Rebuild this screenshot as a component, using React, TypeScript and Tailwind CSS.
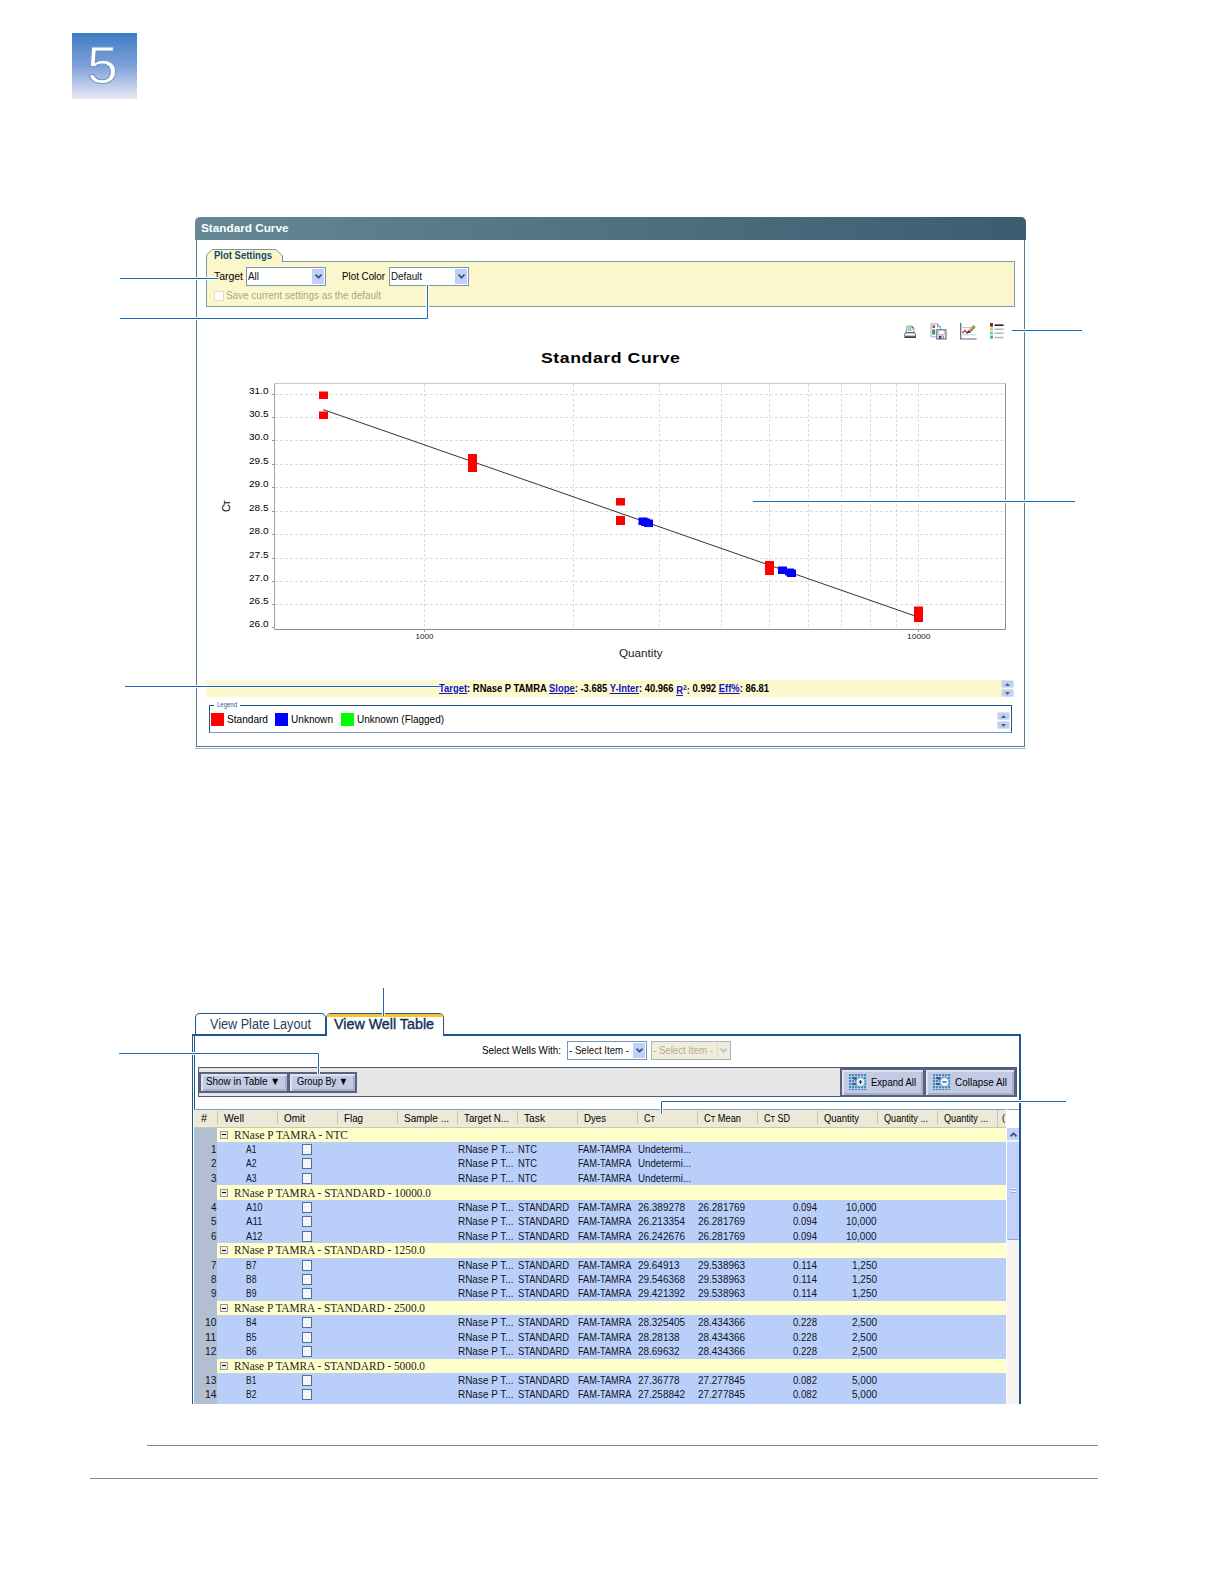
import { useLayoutEffect, useRef, useState } from "react";
import type { ReactNode } from "react";

// Squeezes or stretches a single line of text to a fixed width.
function Fit({ w, children, className = "" }: { w: number; children: ReactNode; className?: string }) {
  const ref = useRef<HTMLSpanElement>(null);
  const [scale, setScale] = useState(1);

  useLayoutEffect(() => {
    if (ref.current) setScale(w / parseFloat(getComputedStyle(ref.current).width));
  }, [w]);

  return (
    <span className={`inline-block shrink-0 text-left ${className}`} style={{ width: w }}>
      <span ref={ref} className="inline-block origin-left whitespace-nowrap" style={{ transform: `scaleX(${scale})` }}>
        {children}
      </span>
    </span>
  );
}

function Chevron({ color = "#3f5688", up = false }: { color?: string; up?: boolean }) {
  return (
    <svg width="9" height="7" viewBox="0 0 9 7" fill="none">
      <path d={up ? "M1.5 5.3 4.5 2.3 7.5 5.3" : "M1.5 1.7 4.5 4.7 7.5 1.7"} stroke={color} strokeWidth="1.9" />
    </svg>
  );
}

function Select({ label, w, disabled = false }: { label: string; w: number; disabled?: boolean }) {
  return (
    <div
      className={`flex h-[19px] w-[80px] items-center justify-between border p-px pl-[1px] ${
        disabled ? "border-[#a3b5bd] bg-[#f0eddc] text-[#b3ae9b]" : "border-[#7796b4] bg-white text-[#111]"
      }`}
    >
      <Fit w={w} className="-mt-[2px]">{label}</Fit>
      <div
        className={`flex h-[15px] w-[12px] items-center justify-center ${
          disabled ? "border-l border-[#dedbc9] bg-[#f0edde]" : "bg-[#c0d0f8]"
        }`}
      >
        <Chevron color={disabled ? "#c5c2b0" : "#3f5688"} />
      </div>
    </div>
  );
}

function Spinner() {
  return (
    <div className="flex h-[17px] w-[13px] flex-col gap-px">
      <div className="flex flex-1 items-center justify-center rounded-[2px] border border-[#d5e0f5] bg-[#c1d0f2]">
        <svg width="5" height="3" viewBox="0 0 5 3"><path d="M0 3 2.5 0 5 3z" fill="#4a608c" /></svg>
      </div>
      <div className="flex flex-1 items-center justify-center rounded-[2px] border border-[#d5e0f5] bg-[#c1d0f2]">
        <svg width="5" height="3" viewBox="0 0 5 3"><path d="M0 0 2.5 3 5 0z" fill="#4a608c" /></svg>
      </div>
    </div>
  );
}

function PlotIcons() {
  return (
    <div className="flex h-[18px] items-start">
      <svg className="mr-[14px] mt-[2px]" width="12" height="13" viewBox="0 0 12 13" fill="none">
        <path d="M3 1h5l2 2v5H2z" fill="#f2fbf6" stroke="#7f9f95" strokeWidth=".9" />
        <path d="M4 3h3M3.5 5h4" stroke="#4f9c85" strokeWidth="1" />
        <path d="M8 1v2h2" stroke="#315c5c" strokeWidth=".8" />
        <path d="M1.5 7.5h9l1 1.5v3.5H.7V9z" fill="#c8cce0" stroke="#454c6c" strokeWidth=".8" />
        <path d="M1 9.5h10" stroke="#fff" strokeWidth="1" />
        <path d="M1 12h10.5" stroke="#171c38" strokeWidth="1.2" />
      </svg>
      <svg className="mr-[13px]" width="17" height="17" viewBox="0 0 17 17" fill="none">
        <path d="M1 .8h6.5l3 3v10H1z" fill="#fafdff" stroke="#8aa9c9" strokeWidth=".9" />
        <path d="M7.5.8v3h3" stroke="#55a3cf" strokeWidth="1" />
        <rect x="2.5" y="2.3" width="2.6" height="2.6" fill="#d82e30" />
        <rect x="2.2" y="6.5" width="3" height="5" fill="#2c9b6a" />
        <rect x="6.8" y="6.8" width="9.2" height="9.2" fill="#ecedf8" stroke="#5c5d86" strokeWidth="1" />
        <rect x="8.6" y="7.3" width="5.6" height="4" fill="#fff" stroke="#a6a7c6" strokeWidth=".6" />
        <rect x="8.8" y="12.8" width="4.8" height="3" fill="#40416c" />
        <rect x="11.5" y="13.3" width="1.5" height="2.2" fill="#fff" />
      </svg>
      <svg className="mr-[13px]" width="17" height="17" viewBox="0 0 17 17" fill="none">
        <path d="M2 4.5h9M2 11.8h14" stroke="#b5d0d2" strokeWidth="1" />
        <path d="M.7 0v16h16" stroke="#546a82" strokeWidth="1.2" />
        <path d="m2.3 10 2.6-2.6 2 2.6 2-1.2" stroke="#d32640" strokeWidth="1.3" />
        <path d="m9 9 5.5-6" stroke="#6b5b36" strokeWidth="2.6" />
        <path d="m9.5 8 4.5-5" stroke="#d4b860" strokeWidth="1.3" />
        <path d="m6.5 10.6 1.6-3 2.2 2z" fill="#3c2930" />
      </svg>
      <svg width="14" height="17" viewBox="0 0 14 17">
        <rect width="3" height="3.6" fill="#8c2425" />
        <rect y="4.4" width="3" height="3" fill="#ecc34c" />
        <rect y="8.4" width="3" height="3" fill="#5fd1e4" />
        <rect y="12.6" width="3" height="3" fill="#3fc45a" />
        <rect x="4.5" y="1.4" width="9" height="1.6" fill="#222" />
        <path d="M4.5 6.2h9M4.5 10.2h9M4.5 14.4h9" stroke="#b5b5b5" strokeWidth="1.5" />
      </svg>
    </div>
  );
}

const yTicks: [string, number][] = [
  ["31.0", 394.5], ["30.5", 417.5], ["30.0", 440.5], ["29.5", 464.5], ["29.0", 487.5], ["28.5", 511.5],
  ["28.0", 534.5], ["27.5", 558.5], ["27.0", 581.5], ["26.5", 604.5], ["26.0", 627.5],
];
const xGrid = [424.5, 573.5, 659.5, 721.5, 769.5, 808.5, 841.5, 870.5, 896.5, 918.5];

const standards = [
  [319, 391.5, 7.5], [319, 411.5, 7.5], [468, 454, 18], [616, 498, 7.5], [616, 516, 9], [765, 561, 14], [914, 606.5, 15.5],
];
const unknowns = [
  [638.5, 517.5, 7.5], [641, 518.5, 7.5], [644, 519.5, 7.5], [778, 566.5, 7.5], [785, 568.5, 7], [787, 569.5, 7.5],
];

function CurvePlot() {
  return (
    <svg width="827" height="330" viewBox="197 345 827 330" fontFamily="Liberation Sans, Arial, sans-serif">
      <text x="541" y="362.7" fontSize="15.5" fontWeight="700" letterSpacing=".5" textLength="139.5" lengthAdjust="spacingAndGlyphs">Standard Curve</text>
      <g stroke="#dcdcdc" strokeWidth="1" strokeDasharray="3 2">
        {yTicks.slice(0, 10).map(([t, y]) => <line key={t} x1="275" x2="1005" y1={y} y2={y} />)}
        {xGrid.map((x) => <line key={x} x1={x} x2={x} y1="384" y2="629" />)}
      </g>
      {yTicks.map(([t, y]) => (
        <g key={t}>
          <line x1="272" x2="275" y1={y} y2={y} stroke="#999" />
          <text x="249" y={y - 1} fontSize="9" textLength="19.5" lengthAdjust="spacingAndGlyphs">{t}</text>
        </g>
      ))}
      <path d="M274.5 383.5H1005.5" stroke="#c9c9c9" />
      <path d="M274.5 383.5V629.5" stroke="#a2a2a2" />
      <path d="M1005.5 383.5V629.5H274.5" stroke="#8c8c8c" fill="none" />
      <path d="M424.5 630v2M918.5 630v2" stroke="#999" />
      <line x1="323" y1="409.5" x2="918" y2="617" stroke="#333" strokeWidth="1" />
      {standards.map(([x, y, h]) => <rect key={`${x}-${y}`} x={x} y={y} width="9" height={h} fill="#f00" />)}
      {unknowns.map(([x, y, h]) => <rect key={`${x}-${y}`} x={x} y={y} width="9" height={h} fill="#00f" />)}
      <text x="415.5" y="639.3" fontSize="8" fill="#222" textLength="18" lengthAdjust="spacingAndGlyphs">1000</text>
      <text x="907" y="639.3" fontSize="8" fill="#222" textLength="23.5" lengthAdjust="spacingAndGlyphs">10000</text>
      <text x="619" y="657" fontSize="11" fill="#222" textLength="43.5" lengthAdjust="spacingAndGlyphs">Quantity</text>
      <text transform="translate(230 512) rotate(-90)" fontSize="11" textLength="12">C<tspan fontSize="9">T</tspan></text>
    </svg>
  );
}

function StandardCurve() {
  const link = "text-[#1313c8] underline";
  return (
    <section className="ml-[195px] mt-[118px] h-[533px] w-[831px] text-[11px] leading-[14px]">
      <div className="flex h-[23px] items-center rounded-t-[5px] bg-linear-to-r from-[#658895] to-[#3a5d70] pb-px pl-[6px] text-[11px] font-bold text-white">
        <Fit w={87.5}>Standard Curve</Fit>
      </div>
      <div className="mx-px h-[507px] border-x border-b border-[#557a94] px-[9px] pt-[9px]">
        <div className="relative z-10 -mb-px flex h-[13px]">
          <svg className="absolute left-0 top-0" width="78" height="13" viewBox="0 0 78 13">
            <path d="M.5 13V6L6 .5H70L76.5 7V13" fill="#fcf7c9" stroke="#7593a4" />
          </svg>
          <Fit w={58} className="relative ml-[8px] -mt-px font-bold leading-[14px] text-[#0d4a78]">Plot Settings</Fit>
        </div>
        <div className="h-[46px] w-[809px] border border-[#7f9aac] bg-[#fcf6cc] pl-[7px] pt-[5px]">
          <div className="flex items-center">
            <Fit w={29} className="-mt-[2px] mr-[3px]">Target</Fit>
            <Select label="All" w={11} />
            <Fit w={43} className="-mt-[2px] ml-[16px] mr-[4px]">Plot Color</Fit>
            <Select label="Default" w={31} />
          </div>
          <div className="mt-[2px] flex items-center text-[#a9a58d]">
            <span className="mr-[2px] mt-[1px] h-[10px] w-[10px] border border-[#e0dcc2] bg-white" />
            <Fit w={155}>Save current settings as the default</Fit>
          </div>
        </div>
        <div className="flex h-[38px] justify-end pr-[11px] pt-[16px]">
          <PlotIcons />
        </div>
        <div className="-mx-[9px]">
          <CurvePlot />
        </div>
        <div className="mt-[5px] flex h-[17px] w-[808px] items-center justify-between bg-[#fcf9cf] pl-[233px] font-bold">
          <Fit w={330}>
            <span className={link}>Target</span>: RNase P TAMRA <span className={link}>Slope</span>: -3.685{" "}
            <span className={link}>Y-Inter</span>: 40.966{" "}
            <span className="relative top-[2px] text-[#1313c8]">
              <span className="underline">R</span><span className="relative -top-[4px] text-[8px]">2</span>:
            </span>{" "}
            0.992 <span className={link}>Eff%</span>: 86.81
          </Fit>
          <Spinner />
        </div>
        <div className="relative ml-[3px] mt-[8px] flex h-[28px] w-[803px] items-center border border-b-[#7c9ab5] border-l-[#2c5378] border-r-[#2c5378] border-t-[#2c5378] pl-[1px]">
          <span className="absolute left-[4px] top-[-6px] flex bg-white px-[3px] text-[7px] leading-[10px] text-[#2d6090]">
            <Fit w={20}>Legend</Fit>
          </span>
          <span className="mr-[3px] h-[13px] w-[13px] bg-[#f00]" />
          <Fit w={41}>Standard</Fit>
          <span className="ml-[7px] mr-[3px] h-[13px] w-[13px] bg-[#00f]" />
          <Fit w={42}>Unknown</Fit>
          <span className="ml-[8px] mr-[3px] h-[13px] w-[13px] bg-[#0f0]" />
          <Fit w={87}>Unknown (Flagged)</Fit>
          <span className="ml-auto mr-px mt-[3px]"><Spinner /></span>
        </div>
      </div>
      <div className="mt-px h-px bg-[#9db9cf]" />
    </section>
  );
}

const rowData: { group: string; gw: number; rows: [string, string, string, string, string, string][] }[] = [
  { group: "RNase P TAMRA - NTC", gw: 114, rows: [
    ["A1", "NTC", "Undetermi...", "", "", ""],
    ["A2", "NTC", "Undetermi...", "", "", ""],
    ["A3", "NTC", "Undetermi...", "", "", ""],
  ] },
  { group: "RNase P TAMRA - STANDARD - 10000.0", gw: 197, rows: [
    ["A10", "STANDARD", "26.389278", "26.281769", "0.094", "10,000"],
    ["A11", "STANDARD", "26.213354", "26.281769", "0.094", "10,000"],
    ["A12", "STANDARD", "26.242676", "26.281769", "0.094", "10,000"],
  ] },
  { group: "RNase P TAMRA - STANDARD - 1250.0", gw: 191, rows: [
    ["B7", "STANDARD", "29.64913", "29.538963", "0.114", "1,250"],
    ["B8", "STANDARD", "29.546368", "29.538963", "0.114", "1,250"],
    ["B9", "STANDARD", "29.421392", "29.538963", "0.114", "1,250"],
  ] },
  { group: "RNase P TAMRA - STANDARD - 2500.0", gw: 191, rows: [
    ["B4", "STANDARD", "28.325405", "28.434366", "0.228", "2,500"],
    ["B5", "STANDARD", "28.28138", "28.434366", "0.228", "2,500"],
    ["B6", "STANDARD", "28.69632", "28.434366", "0.228", "2,500"],
  ] },
  { group: "RNase P TAMRA - STANDARD - 5000.0", gw: 191, rows: [
    ["B1", "STANDARD", "27.36778", "27.277845", "0.082", "5,000"],
    ["B2", "STANDARD", "27.258842", "27.277845", "0.082", "5,000"],
  ] },
];

const headers: [ReactNode, number][] = [
  ["Well", 20], ["Omit", 21], ["Flag", 19], ["Sample ...", 45], ["Target N...", 45], ["Task", 21], ["Dyes", 22],
  [<>C<span className="text-[9px]">T</span></>, 11],
  [<>C<span className="text-[9px]">T</span> Mean</>, 37],
  [<>C<span className="text-[9px]">T</span> SD</>, 26],
  ["Quantity", 35], ["Quantity ...", 44], ["Quantity ...", 44],
];

const columns =
  "grid grid-cols-[23px_60px_60px_60px_60px_60px_60px_60px_60px_60px_60px_60px_60px_60px_9px]";

const numWidth = (s: string) => [...s].reduce((sum, c) => sum + (c === "." || c === "," ? 3 : 5.5), 0);
const resultWidth = (s: string) => (s.startsWith("U") ? 53 : numWidth(s));

function Checkbox() {
  return <span className="ml-[25px] mt-[2px] h-[11px] w-[10px] border border-[#4f6f96] bg-[#f4f7f4]" />;
}

function WellTable() {
  let n = 0;
  return (
    <div className="w-[812px]">
      <div className={`${columns} h-[18.6px] border-b border-t border-b-[#cbc7b2] border-t-[#7f9dbd] bg-[#ece9d8] leading-[17px]`}>
        <span className="pl-[7px]"><Fit w={6}>#</Fit></span>
        {headers.map(([h, w], i) => (
          <span key={i} className="flex pl-[6px]">
            <span className="-ml-[6px] mr-[6px] mt-[1px] h-[13px] w-px bg-[#c9c6b8]" />
            <Fit w={w}>{h}</Fit>
          </span>
        ))}
        <span className="border-l border-[#c9c6b8] pl-[4px] text-[9px]"><Fit w={3}>(</Fit></span>
      </div>
      {rowData.map(({ group, gw, rows }) => (
        <div key={group}>
          <div className="flex h-[14.45px] bg-[#b2bed2] pl-[23px]">
            <div className="flex flex-1 items-center bg-[#ffffcc] pl-[3px] font-['Liberation_Serif',serif] text-[12px] leading-[14px] text-[#222]">
              <span className="mr-[6px] flex h-[8px] w-[8px] items-center justify-center border border-[#9797a0] bg-[#f0f0ea]">
                <span className="h-px w-[4px] bg-black" />
              </span>
              <Fit w={gw}>{group}</Fit>
            </div>
          </div>
          {rows.map(([well, task, ct, mean, sd, qty]) => {
            n += 1;
            return (
              <div key={well} className={`${columns} h-[14.45px] bg-[#b9cffa] leading-[15px] text-[#10141f]`}>
                <span className="bg-[#b2bed2] pr-[.5px] text-right"><Fit w={n > 9 ? 11.5 : 5.5}>{n}</Fit></span>
                <span className="pl-[29px]"><Fit w={well.length > 2 ? 16.5 : 10.5}>{well}</Fit></span>
                <span className="flex"><Checkbox /></span>
                <span />
                <span />
                <span className="pl-px"><Fit w={55.5}>RNase P T...</Fit></span>
                <span className="pl-px"><Fit w={task === "NTC" ? 19 : 51}>{task}</Fit></span>
                <span className="pl-px"><Fit w={53.5}>FAM-TAMRA</Fit></span>
                <span className="pl-px"><Fit w={resultWidth(ct)}>{ct}</Fit></span>
                <span className="pl-px">{mean && <Fit w={numWidth(mean)}>{mean}</Fit>}</span>
                <span className="pr-[.5px] text-right">{sd && <Fit w={24}>{sd}</Fit>}</span>
                <span className="pr-[.5px] text-right">{qty && <Fit w={numWidth(qty)}>{qty}</Fit>}</span>
                <span /><span /><span />
              </div>
            );
          })}
        </div>
      ))}
      <div className="h-[3px] bg-[#b9cffa]"><div className="h-full w-[23px] bg-[#b2bed2]" /></div>
    </div>
  );
}

function WellsIcon({ minus = false }: { minus?: boolean }) {
  return (
    <svg width="18" height="16" viewBox="0 0 18 16">
      <rect width="18" height="16" fill="#4a86bd" />
      <path d="M2.5 0v16M5.5 0v16M8.5 0v16M11.5 0v16M14.5 0v16M17.5 0v16" stroke="#a5c8e6" strokeWidth="1" />
      <path d="M0 2.5h18M0 5.5h18M0 8.5h18M0 11.5h18M0 14.5h18" stroke="#a5c8e6" strokeWidth="1" />
      <rect x="3" y="3" width="4" height="2" fill="#3a5f8e" />
      <rect x="3" y="9" width="4" height="2" fill="#3a5f8e" />
      <path d="M5 5.5h3" stroke="#b84a5c" />
      <circle cx="11.5" cy="8" r="4.5" fill="#eff6fc" stroke="#6d9bc6" />
      <path d={minus ? "M9.5 8h4" : "M9.5 8h4M11.5 6v4"} stroke="#173c70" strokeWidth="1.2" />
    </svg>
  );
}

const bevel = "flex items-center border-2 border-[#5b637c] bg-[#c3cbe4] inset-shadow-[2px_2px_0_#dde3f1,-2px_-2px_0_#a6b0cb]";

function WellTablePanel() {
  return (
    <section className="ml-[192px] mt-[263px] w-[829px] text-[11px] leading-[14px]">
      <div className="relative z-10 -mb-[2px] flex h-[23px] pl-[3px] text-[14px] leading-[20px]">
        <div className="w-[131px] rounded-t-[5px] border-[1.5px] border-b-2 border-[#1d568b] bg-white pl-[14px] text-[#27425e]">
          <Fit w={101}>View Plate Layout</Fit>
        </div>
        <div className="h-[23px] w-[118px] rounded-t-[5px] border border-b-0 border-[#1d568b] bg-white">
          <div className="h-[3px] rounded-t-[4px] bg-[#f6c42e]" />
          <div className="-mt-[3px] pl-[7px] text-[#0c3158] [-webkit-text-stroke:0.35px]">
            <Fit w={100}>View Well Table</Fit>
          </div>
        </div>
      </div>
      <div className="flex h-[370px] flex-col overflow-hidden border-l border-r-2 border-t-2 border-[#1d568b] pl-px">
        <div className="flex h-full flex-col border-l border-[#1d568b]">
          <div className="flex items-center pl-[287px] pt-[5px]">
            <Fit w={79} className="-mt-px mr-[6px]">Select Wells With:</Fit>
            <Select label="- Select Item -" w={60} />
            <span className="w-[4px]" />
            <Select label="- Select Item -" w={60} disabled />
          </div>
          <div className="ml-[3px] mt-[7px] flex h-[30px] w-[819px] items-center border border-[#4e5878] bg-[#e6e6e6]">
            <div className={`${bevel} h-[21px] w-[90px] pb-[2px] pl-[5px]`}><Fit w={74}>Show in Table ▼</Fit></div>
            <div className={`${bevel} -ml-px h-[21px] w-[69px] pb-[2px] pl-[7px]`}><Fit w={51}>Group By ▼</Fit></div>
            <div className={`${bevel} ml-auto h-[29px] w-[85px] gap-[4px] pb-px pl-[7px]`}><WellsIcon /><Fit w={45}>Expand All</Fit></div>
            <div className={`${bevel} -ml-px h-[29px] w-[92px] gap-[4px] pb-px pl-[7px]`}><WellsIcon minus /><Fit w={52}>Collapse All</Fit></div>
          </div>
          <div className="-ml-px mt-[12px] flex flex-1">
            <WellTable />
            <div className="ml-px flex w-[12px] flex-col border-t border-[#7f9dbd] bg-[#f4f3ef]">
              <div className="h-[18px] bg-white" />
              <div className="flex h-[12px] items-center justify-center rounded-[1px] bg-[#c3d2fb]"><Chevron up /></div>
              <div className="mt-[2px] flex h-[98px] w-[12px] flex-col items-center rounded-[1px] border-b border-[#8ea6d4] bg-[#c3d2fb] pt-[46px]">
                <span className="h-[2px] w-[5px] border-b border-[#8fa8de] bg-[#edf2ff]" />
                <span className="mt-px h-[2px] w-[5px] border-b border-[#8fa8de] bg-[#edf2ff]" />
              </div>
            </div>
          </div>
        </div>
      </div>
    </section>
  );
}

function Callouts() {
  const lines = [
    "M120 278.5H218",
    "M120 318.5H427.5V285",
    "M1012 330.5H1082",
    "M753 501.5H1075",
    "M125 686.5H441",
    "M383.5 988V1016",
    "M119 1053.5H318.5V1074",
    "M1066 1101.5H661.5V1114",
  ];
  return (
    <svg className="pointer-events-none absolute left-0 top-0 z-20" width="1224" height="1584" fill="none">
      {lines.map((d) => (
        <g key={d}>
          <path d={d} stroke="#fff" strokeWidth="3" />
          <path d={d} stroke="#1a6cb4" strokeWidth="1" />
        </g>
      ))}
    </svg>
  );
}

export default function App() {
  return (
    <main className="relative flex h-[1584px] w-[1224px] flex-col overflow-hidden bg-white font-['Liberation_Sans',Arial,sans-serif] text-black">
      <div className="ml-[72px] mt-[33px] flex h-[66px] w-[65px] items-center justify-center bg-linear-to-b from-[#3a7dc5] via-[#7fa0d6] to-[#e9e8f5]">
        <svg width="65" height="66" viewBox="0 0 65 66">
          <text transform="translate(15 50) scale(1.07 1)" fontSize="52" fill="#fff" stroke="#7094d0" strokeWidth="1" fontFamily="Liberation Sans, Arial, sans-serif">5</text>
        </svg>
      </div>
      <StandardCurve />
      <WellTablePanel />
      <div className="ml-[147px] mt-[41px] h-px w-[951px] bg-[#85878c]" />
      <div className="ml-[90px] mt-[32px] h-px w-[1008px] bg-[#85878c]" />
      <Callouts />
    </main>
  );
}
